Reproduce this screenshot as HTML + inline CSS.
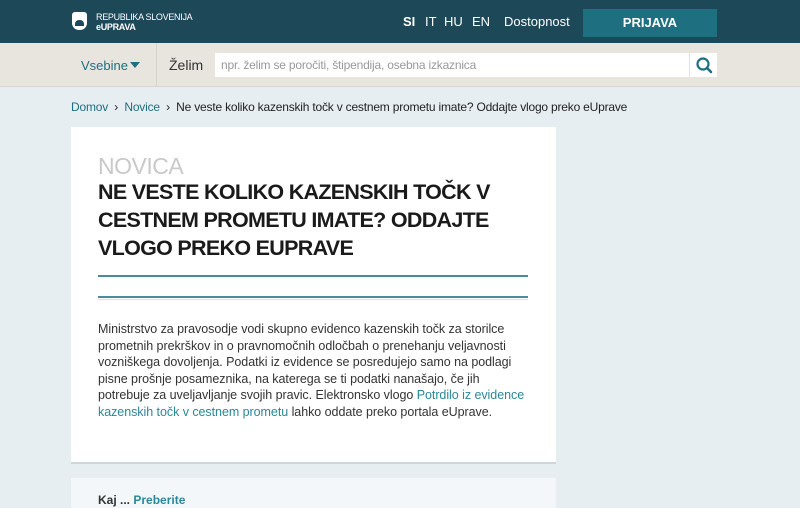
<!DOCTYPE html>
<html><head><meta charset="utf-8"><style>
*{margin:0;padding:0;box-sizing:border-box}
body{width:800px;height:500px;overflow:hidden;background:#e6eef2;font-family:"Liberation Sans",sans-serif;position:relative}
.hdr{position:absolute;left:0;top:0;width:800px;height:43px;background:#1d4858}
.logo{position:absolute;left:72px;top:12px;width:15px;height:18px;background:#fff;border-radius:3px 3px 7px 7px}
.logo:after{content:"";position:absolute;left:3px;top:8px;width:9px;height:6px;background:#1d4858;border-radius:4px 4px 0 0}
.lt{position:absolute;left:96px;top:12px;color:#fff;font-size:9px;line-height:10px;letter-spacing:-0.3px}
.lang{position:absolute;top:14px;color:#fff;font-size:13px}
.btn{position:absolute;left:583px;top:9px;width:134px;height:28px;background:#1e6f80;color:#fff;font-weight:bold;font-size:13px;text-align:center;line-height:28px}
.nav{position:absolute;left:0;top:43px;width:800px;height:44px;background:#e8e5df;border-bottom:1px solid #d8d6d0}
.sep{position:absolute;left:156px;top:0;width:1px;height:44px;background:#d6d3cc}
.inp{position:absolute;left:215px;top:53px;width:474px;height:24px;background:#fff;color:#999;font-size:12px;line-height:24px;padding-left:6px;letter-spacing:-0.2px}
.sb{position:absolute;left:689px;top:53px;width:28px;height:24px;background:#fff;border-left:1px solid #e0e0e0}
.bc{position:absolute;left:71px;top:100px;font-size:12px;color:#222;letter-spacing:-0.2px}
.bc a{color:#1e6f80;text-decoration:none}
.card{position:absolute;left:71px;top:127px;width:485px;height:337px;background:#fff;border-bottom:2px solid #cfd6da}
.nov{position:absolute;left:98px;top:153px;font-size:23px;color:#c9c9c9;letter-spacing:-0.5px}
.tt{position:absolute;left:98px;top:178px;font-size:21.5px;font-weight:bold;line-height:28px;color:#1a1a1a;letter-spacing:-0.7px;white-space:nowrap}
.ln{position:absolute;left:98px;width:430px;height:2px;background:#4a8c99}
.bd{position:absolute;left:98px;top:321px;font-size:12.5px;line-height:16.6px;color:#333;letter-spacing:-0.05px;white-space:nowrap}
.bd a{color:#2a8898;text-decoration:none}
.card2{position:absolute;left:71px;top:478px;width:485px;height:30px;background:#f3f7f9}
</style></head><body>
<div class="hdr">
<div class="logo"></div>
<div class="lt">REPUBLIKA SLOVENIJA<br><b>eUPRAVA</b></div>
<span class="lang" style="left:403px;font-weight:bold">SI</span>
<span class="lang" style="left:425px">IT</span>
<span class="lang" style="left:444px">HU</span>
<span class="lang" style="left:472px">EN</span>
<span class="lang" style="left:504px">Dostopnost</span>
<div class="btn">PRIJAVA</div>
</div>
<div class="nav">
<span style="position:absolute;left:81px;top:15px;color:#1e6f80;font-size:13px">Vsebine</span>
<span style="position:absolute;left:130px;top:19px;width:0;height:0;border-left:5px solid transparent;border-right:5px solid transparent;border-top:6px solid #1e6f80"></span>
<div class="sep"></div>
<span style="position:absolute;left:169px;top:14px;color:#333;font-size:14px">Želim</span>
</div>
<div class="inp">npr. želim se poročiti, štipendija, osebna izkaznica</div>
<div class="sb"><svg width="28" height="24" viewBox="0 0 28 24"><circle cx="13" cy="11" r="5.5" fill="none" stroke="#1e6f80" stroke-width="2.2"/><path d="M17 15l4 4" stroke="#1e6f80" stroke-width="2.6" stroke-linecap="round"/></svg></div>
<div class="bc"><a>Domov</a> &nbsp;›&nbsp; <a>Novice</a> &nbsp;›&nbsp; Ne veste koliko kazenskih točk v cestnem prometu imate? Oddajte vlogo preko eUprave</div>
<div class="card"></div>
<div class="nov">NOVICA</div>
<div class="tt">NE VESTE KOLIKO KAZENSKIH TOČK V<br>CESTNEM PROMETU IMATE? ODDAJTE<br>VLOGO PREKO EUPRAVE</div>
<div class="ln" style="top:275px"></div>
<div class="ln" style="top:296px"></div>
<div class="ln" style="top:299px;height:1px;background:#e2e2e2"></div>
<div class="bd">Ministrstvo za pravosodje vodi skupno evidenco kazenskih točk za storilce<br>prometnih prekrškov in o pravnomočnih odločbah o prenehanju veljavnosti<br>vozniškega dovoljenja. Podatki iz evidence se posredujejo samo na podlagi<br>pisne prošnje posameznika, na katerega se ti podatki nanašajo, če jih<br>potrebuje za uveljavljanje svojih pravic. Elektronsko vlogo <a>Potrdilo iz evidence</a><br><a>kazenskih točk v cestnem prometu</a> lahko oddate preko portala eUprave.</div>
<div class="card2"><span style="position:absolute;left:27px;top:15px;font-size:12px;color:#333;font-weight:bold">Kaj ... <span style="color:#2a8898">Preberite</span></span></div>
</body></html>
